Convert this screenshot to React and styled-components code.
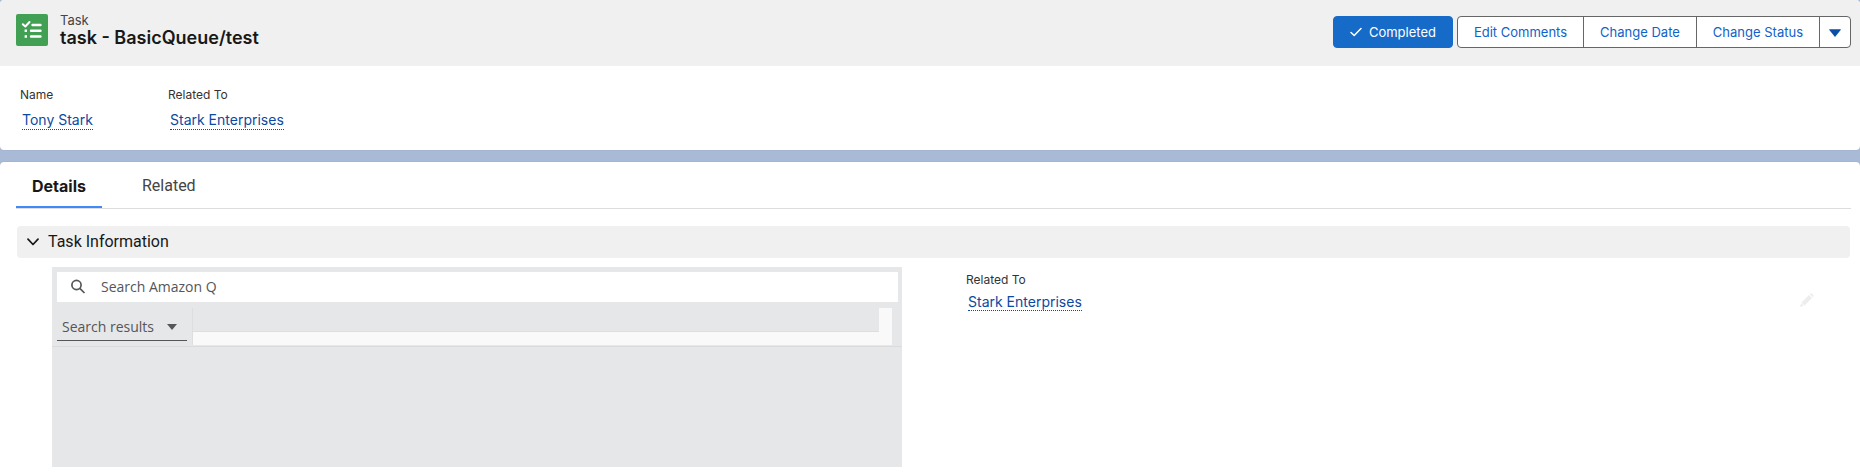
import React from "react";
import styled, { createGlobalStyle, css } from "styled-components";

const GlobalStyle = createGlobalStyle`
  *, *::before, *::after { box-sizing: border-box; }
  body {
    margin: 0;
    background: #fff;
    color: #181818;
    font-family: Inter, "Liberation Sans", sans-serif;
    font-size: 13px;
    line-height: 20px;
  }
  button, input, select { font: inherit; margin: 0; }
  h1, dl, dd, dt { margin: 0; }
`;

const Page = styled.div`
  background: #a8bad6;
`;

const Card = styled.section`
  background: #fff;
  overflow: hidden;
  border-radius: ${(p) => (p.$last ? "4px 4px 0 0" : "4px")};
  box-shadow: 0 0 1px #8a93a0;
  margin-bottom: ${(p) => (p.$last ? 0 : 12)}px;
`;

const Header = styled.header`
  display: flex;
  align-items: flex-start;
  gap: 12px;
  height: 66px;
  padding: 14px 9px 0 16px;
  background: #f0f0f0;
`;

const TaskIcon = styled.svg`
  flex: none;
  width: 32px;
  height: 32px;
  border-radius: 2px;
  background: #41a053;
`;

const Heading = styled.div`
  flex: 1;
  min-width: 0;
`;

const Eyebrow = styled.div`
  color: #444;
  line-height: 13px;
`;

const Title = styled.h1`
  font-size: 18px;
  font-weight: 600;
  line-height: 22px;
`;

const Actions = styled.div`
  display: flex;
  gap: 4px;
  padding-top: 2px;
`;

const Button = styled.button`
  display: flex;
  align-items: center;
  height: 32px;
  padding: 0 16px;
  border: 1px solid #666;
  background: #fff;
  color: #0f62c8;
  white-space: nowrap;
  ${(p) =>
    p.$primary &&
    css`
      gap: 7px;
      border-color: #166ac8;
      border-radius: 4px;
      background: #166ac8;
      color: #fff;
    `}
`;

const ButtonGroup = styled.div`
  display: flex;
  ${Button} + ${Button} { margin-left: -1px; }
  ${Button}:first-child { border-radius: 4px 0 0 4px; }
  ${Button}:last-child { border-radius: 0 4px 4px 0; padding: 2px 9px 0; }
`;

const Highlights = styled.dl`
  display: flex;
  height: 84px;
  padding: 19px 20px 0;
`;

const Field = styled.div`
  ${(p) => p.$fixed && css`width: 148px;`}
`;

const FieldLabel = styled.dt`
  color: #333;
  font-size: 12px;
  line-height: 20px;
`;

const FieldValue = styled.dd`
  padding: ${(p) => (p.$compact ? 4 : 6)}px 0 0 2px;
  font-size: 14px;
  line-height: ${(p) => (p.$compact ? 16 : 18)}px;
`;

const RecordLink = styled.a`
  display: inline-block;
  border-bottom: 1px dotted #0b4a9e;
  color: #0b4a9e;
  text-decoration: none;
`;

const Tabs = styled.nav`
  display: flex;
  height: 47px;
  margin: 0 9px 0 16px;
  border-bottom: 1px solid #ddd;
`;

const Tab = styled.button`
  display: flex;
  align-items: center;
  margin-right: 24px;
  padding: 4px 16px 0;
  border: 0;
  border-bottom: 2px solid ${(p) => (p.$active ? "#4189f5" : "transparent")};
  background: none;
  color: ${(p) => (p.$active ? "#181818" : "#444")};
  font-family: ${(p) => (p.$active ? "Inter" : "Roboto")}, sans-serif;
  font-size: 16px;
  font-weight: ${(p) => (p.$active ? 700 : 400)};
`;

const SectionToggle = styled.button`
  display: flex;
  align-items: center;
  gap: 9px;
  width: 100%;
  height: 32px;
  padding: 0 10px;
  border: 0;
  border-radius: 4px;
  background: #f0f0f0;
  color: #181818;
  font-family: Roboto, sans-serif;
  font-size: 16px;
  line-height: 22px;
`;

const Section = styled.div`
  padding: 17px 10px 6px 17px;
`;

const Columns = styled.div`
  display: grid;
  grid-template-columns: 1fr 1fr;
  gap: 64px;
  padding: 9px 34px 0 35px;
`;

const QPanel = styled.div`
  height: 200px;
  padding-top: 5px;
  background: #e6e7e9;
  color: #545658;
  font-family: "Open Sans", sans-serif;
  font-size: 14px;
`;

const SearchBox = styled.label`
  display: flex;
  align-items: center;
  gap: 15px;
  height: 30px;
  margin: 0 4px 0 5px;
  padding: 0 13px;
  background: #fff;
`;

const SearchInput = styled.input`
  flex: 1;
  min-width: 0;
  padding: 0;
  border: 0;
  outline: 0;
  background: none;
  color: inherit;
  &::placeholder { color: #545658; opacity: 1; }
`;

const Toolbar = styled.div`
  display: flex;
  gap: 5px;
  height: 45px;
  padding: 6px 10px 0 5px;
  border-bottom: 1px solid #d9dbdc;
`;

const SelectWrap = styled.label`
  display: grid;
  grid-template-columns: 1fr 20px;
  align-items: center;
  width: 130px;
  height: 33px;
  padding-top: 5px;
  border-bottom: 1px solid #545658;
  svg { grid-area: 1 / 2; pointer-events: none; }
`;

const Select = styled.select`
  grid-area: 1 / 1 / 2 / 3;
  height: 26px;
  padding: 0 0 0 5px;
  border: 0;
  appearance: none;
  background: none;
  color: inherit;
`;

const ScrollArea = styled.div`
  flex: 1;
  height: 37px;
  padding: 0 13px 13px 0;
  border-left: 1px solid #dcdee0;
  background: #f9f9f9;
`;

const ScrollContent = styled.div`
  height: 24px;
  border-bottom: 1px solid #dcdee0;
  background: #e6e7e9;
`;

const EditableField = styled.div`
  display: flex;
  justify-content: space-between;
  align-items: flex-start;
  padding-top: 3px;
`;

const EditButton = styled.button`
  display: flex;
  margin: 23px 2px 0 0;
  padding: 0;
  border: 0;
  background: none;
`;

const DetailList = styled.dl`
  flex: 1;
`;

const RelatedAccount = ({ compact }) => (
  <Field>
    <FieldLabel>Related To</FieldLabel>
    <FieldValue $compact={compact}>
      <RecordLink href="#account">Stark Enterprises</RecordLink>
    </FieldValue>
  </Field>
);

export default function App() {
  return (
    <Page>
      <GlobalStyle />
      <Card>
        <Header>
          <TaskIcon viewBox="0 0 32 32" fill="none" stroke="#fff" strokeWidth="2.6" aria-hidden="true">
            <path d="M16.500 11H24.500M15 16.700H24.500M15 22.500H24.500" strokeLinecap="round" strokeWidth="2.4" />
            <path d="M6.800 10.200L9.300 12.500L13.500 8" strokeWidth="2" strokeLinecap="round" strokeLinejoin="round" />
            <path d="M8.600 16.700H11M8.600 22.500H11" />
          </TaskIcon>
          <Heading>
            <Eyebrow>Task</Eyebrow>
            <Title>task - BasicQueue/test</Title>
          </Heading>
          <Actions>
            <Button $primary>
              <svg width="12" height="10" viewBox="0 0 12 10" fill="none" stroke="#fff" strokeWidth="1.500" strokeLinecap="round" strokeLinejoin="round" aria-hidden="true">
                <path d="M1 5.500L4.200 8.500L11 1.500" />
              </svg>
              Completed
            </Button>
            <ButtonGroup>
              <Button>Edit Comments</Button>
              <Button>Change Date</Button>
              <Button>Change Status</Button>
              <Button aria-label="More actions">
                <svg width="12" height="8" viewBox="0 0 12 8" aria-hidden="true">
                  <path d="M0.500 0.300H11.500Q12 0.500 11.700 1L6 8L0.300 1Q0 0.500 0.500 0.300Z" fill="#0b4fa8" />
                </svg>
              </Button>
            </ButtonGroup>
          </Actions>
        </Header>
        <Highlights>
          <Field $fixed>
            <FieldLabel>Name</FieldLabel>
            <FieldValue>
              <RecordLink href="#contact">Tony Stark</RecordLink>
            </FieldValue>
          </Field>
          <RelatedAccount />
        </Highlights>
      </Card>
      <Card $last>
        <Tabs>
          <Tab $active>Details</Tab>
          <Tab>Related</Tab>
        </Tabs>
        <Section>
          <SectionToggle aria-expanded="true">
            <svg width="12" height="8" viewBox="0 0 12 8" fill="none" stroke="#181818" strokeWidth="1.700" strokeLinecap="round" strokeLinejoin="round" aria-hidden="true">
              <path d="M1 1.200L6 6.500L11 1.200" />
            </svg>
            Task Information
          </SectionToggle>
          <Columns>
            <QPanel>
              <SearchBox>
                <svg width="16" height="16" viewBox="0 0 16 16" fill="none" stroke="#545658" strokeWidth="1.700" aria-hidden="true">
                  <circle cx="6.500" cy="6" r="4.600" />
                  <path d="M9.800 9.300L14.500 14" />
                </svg>
                <SearchInput type="search" placeholder="Search Amazon Q" aria-label="Search Amazon Q" />
              </SearchBox>
              <Toolbar>
                <SelectWrap>
                  <Select aria-label="View" defaultValue="results">
                    <option value="results">Search results</option>
                  </Select>
                  <svg width="10" height="6" viewBox="0 0 10 6" aria-hidden="true">
                    <path d="M0 0H10L5 6Z" fill="#545658" />
                  </svg>
                </SelectWrap>
                <ScrollArea>
                  <ScrollContent />
                </ScrollArea>
              </Toolbar>
            </QPanel>
            <EditableField>
              <DetailList>
                <RelatedAccount compact />
              </DetailList>
              <EditButton aria-label="Edit Related To">
                <svg width="14" height="14" viewBox="0 0 14 14" fill="#ededed" aria-hidden="true">
                  <path d="M1.500 9.500L9 2L12 5L4.500 12.500ZM9.800 1.200L10.500 0.500Q11.200 0 12 0.700L13.300 2Q14 2.800 13.500 3.500L12.800 4.200ZM1 10.300L3.800 13L0.500 13.800Q0 13.900 0.200 13.300Z" />
                </svg>
              </EditButton>
            </EditableField>
          </Columns>
        </Section>
      </Card>
    </Page>
  );
}
